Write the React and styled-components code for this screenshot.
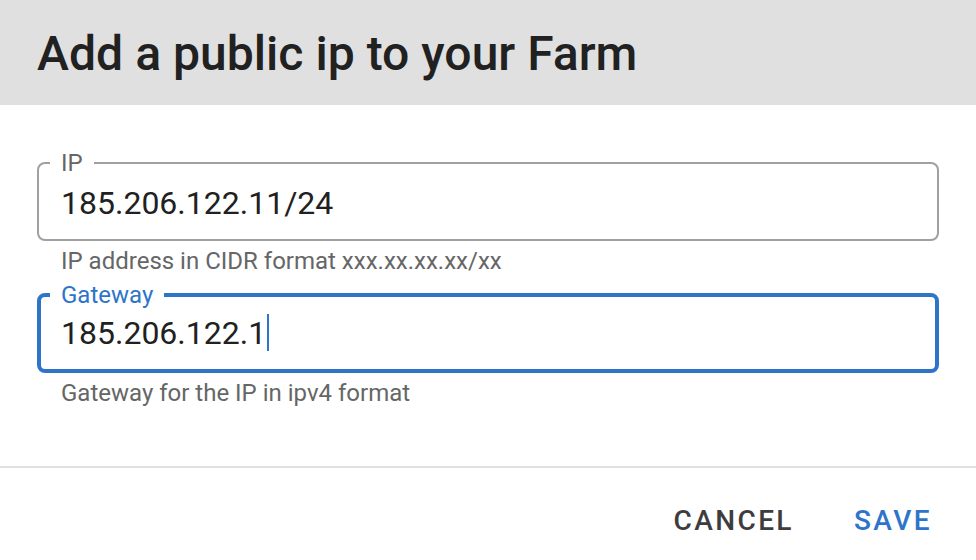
import React from "react";
import styled, { createGlobalStyle } from "styled-components";

const GlobalStyle = createGlobalStyle`
  html, body { margin: 0; padding: 0; background: #ffffff; }
  body { font-family: Roboto, "Noto Sans", "Liberation Sans", sans-serif; }
  * { box-sizing: border-box; }
`;

const BLUE = "#2e74c9";
const MEDIUM = `"Roboto Medium", Roboto, "Noto Sans", sans-serif`;

const Dialog = styled.div`
  width: 976px;
  height: 560px;
  background: #ffffff;
  display: flex;
  flex-direction: column;
  overflow: hidden;
`;

const Header = styled.div`
  height: 105px;
  background: #e0e0e0;
  padding: 26px 37px 0;
`;

const Title = styled.h2`
  margin: 0;
  font-family: ${MEDIUM};
  font-size: 48px;
  line-height: 56px;
  font-weight: 500;
  letter-spacing: 0;
  color: #212121;
`;

const Content = styled.div`
  padding: 46px 37px 0 37px;
  display: flex;
  flex-direction: column;
  height: 361px;
`;

const Field = styled.div`
  display: flex;
  flex-direction: column;
  margin-bottom: ${(p) => p.$gap}px;
`;

const Outline = styled.fieldset`
  margin: 0;
  width: 902px;
  min-width: 0;
  height: 90px;
  border: ${(p) => (p.$focused ? `4px solid ${BLUE}` : "2px solid #a0a0a0")};
  border-radius: 8px;
  padding: ${(p) => (p.$focused ? "6px 0 0 20px" : "8px 0 0 22px")};
`;

const Legend = styled.legend`
  margin-left: -11px;
  padding: 0 11px 0 ${(p) => (p.$focused ? 11 : 11)}px;
  font-size: 24px;
  line-height: 24px;
  color: ${(p) => (p.$focused ? BLUE : "#666666")};
`;

const Value = styled.div`
  font-size: 32px;
  line-height: 40px;
  color: #212121;
  white-space: nowrap;
`;

const Caret = styled.span`
  display: inline-block;
  width: 2px;
  height: 37px;
  margin-left: 1px;
  background: ${BLUE};
  vertical-align: -7px;
`;

const Helper = styled.div`
  margin-top: 4px;
  padding-left: 24px;
  font-size: 24px;
  line-height: 32px;
  color: #666666;
`;

const Divider = styled.div`
  height: 2px;
  background: #e0e0e0;
`;

const Actions = styled.div`
  display: flex;
  justify-content: flex-end;
  gap: 28px;
  padding: 16px 28px 0 0;
`;

const Button = styled.button`
  border: none;
  background: transparent;
  font-family: ${MEDIUM};
  font-size: 28px;
  line-height: 49px;
  font-weight: 500;
  letter-spacing: 2.4px;
  text-transform: uppercase;
  padding: 12px 16px;
  color: ${(p) => (p.$primary ? BLUE : "#3d3d3d")};
  cursor: pointer;
`;

function TextField({ label, value, helper, focused, gap }) {
  return (
    <Field $gap={gap}>
      <Outline $focused={focused}>
        <Legend $focused={focused}>{label}</Legend>
        <Value>
          {value}
          {focused && <Caret />}
        </Value>
      </Outline>
      <Helper>{helper}</Helper>
    </Field>
  );
}

export default function App() {
  return (
    <>
      <GlobalStyle />
      <Dialog>
        <Header>
          <Title>Add a public ip to your Farm</Title>
        </Header>
        <Content>
          <TextField
            label="IP"
            value="185.206.122.11/24"
            helper="IP address in CIDR format xxx.xx.xx.xx/xx"
            gap={6}
          />
          <TextField
            label="Gateway"
            value="185.206.122.1"
            helper="Gateway for the IP in ipv4 format"
            focused
            gap={0}
          />
        </Content>
        <Divider />
        <Actions>
          <Button>Cancel</Button>
          <Button $primary>Save</Button>
        </Actions>
      </Dialog>
    </>
  );
}
